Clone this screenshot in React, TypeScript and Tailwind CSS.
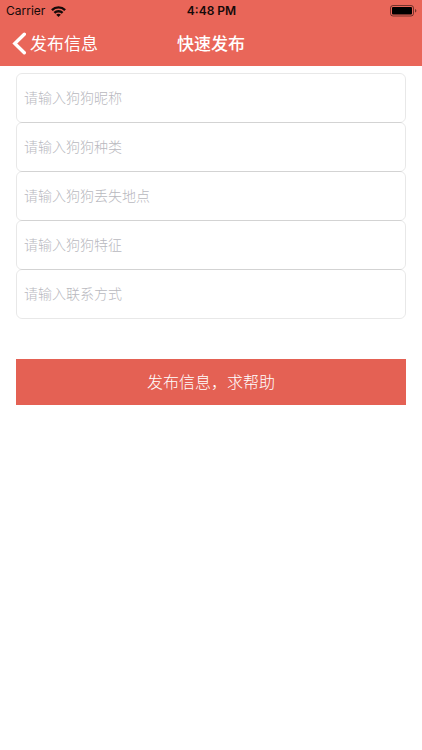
import React from "react";

type Field = {
  name: string;
  placeholder: string;
}

const fields: Field[] = [
  { name: "nickname", placeholder: "请输入狗狗昵称" },
  { name: "breed", placeholder: "请输入狗狗种类" },
  { name: "place", placeholder: "请输入狗狗丢失地点" },
  { name: "feature", placeholder: "请输入狗狗特征" },
  { name: "contact", placeholder: "请输入联系方式" },
];

const WifiIcon = () => (
  <svg width="15" height="11" viewBox="0 0 15 11" fill="none" stroke="#150a09" strokeWidth="2.4">
    <path d="M0.9 4.100a9.400 9.400 0 0 1 13.200 0" />
    <path d="M3.400 6.900a5.800 5.800 0 0 1 8.200 0" />
    <path d="M7.500 11 5.200 8.800a3.300 3.300 0 0 1 4.600 0z" fill="#150a09" stroke="none" />
  </svg>
)

const BatteryIcon = () => (
  <svg width="27" height="12" viewBox="0 0 27 12">
    <rect x="0.5" y="0.5" width="23" height="10.500" rx="2.500" fill="none" stroke="#000" strokeOpacity="0.5" />
    <rect x="2" y="2" width="20" height="7.500" rx="1" fill="#000" />
    <path d="M25 4v3.600c.8-.3 1.400-1 1.400-1.800s-.6-1.500-1.400-1.800z" fill="#000" fillOpacity="0.5" />
  </svg>
)

const StatusBar = () => (
  <div className="grid grid-cols-3 items-center h-[22px] pl-[6px] pr-[5px] text-[12px] text-[#150a09]">
    <div className="flex items-center gap-[6px]">
      <span>Carrier</span>
      <WifiIcon />
    </div>
    <span className="text-center font-semibold">4:48 PM</span>
    <div className="flex justify-end">
      <BatteryIcon />
    </div>
  </div>
)

const NavBar = () => (
  <div className="grid grid-cols-3 items-center h-11 px-3 text-[17px] text-white">
    <button type="button" className="flex items-center gap-1 whitespace-nowrap">
      <svg width="14" height="24" viewBox="0 0 14 24" fill="none" stroke="currentColor" strokeWidth="3.4" strokeLinecap="round">
        <path d="M12.300 2.300 2.800 11.500l9.500 9.200" />
      </svg>
      <span className="pt-0.5">发布信息</span>
    </button>
    <h1 className="pt-0.5 text-center font-medium">快速发布</h1>
  </div>
)

const App = () => {
  return (
    <div lang="zh-CN" className="min-h-screen bg-white font-['Inter','Noto_Sans_CJK_SC',sans-serif]">
      <header className="bg-[#e96659]">
        <StatusBar />
        <NavBar />
      </header>
      <form className="flex flex-col px-4 pt-2">
        {fields.map((field) => (
          <input
            key={field.name}
            name={field.name}
            aria-label={field.placeholder}
            placeholder={field.placeholder}
            className="-mt-px h-[50px] px-[7px] pb-0.5 border border-black/9 rounded-md text-[14px] font-light placeholder:text-[#b8b8be] outline-none"
          />
        ))}
        <button type="button" className="mt-10 h-[46px] bg-[#e46154] text-[16px] font-light text-white">发布信息，求帮助</button>
      </form>
    </div>
  );
}

export default App;
